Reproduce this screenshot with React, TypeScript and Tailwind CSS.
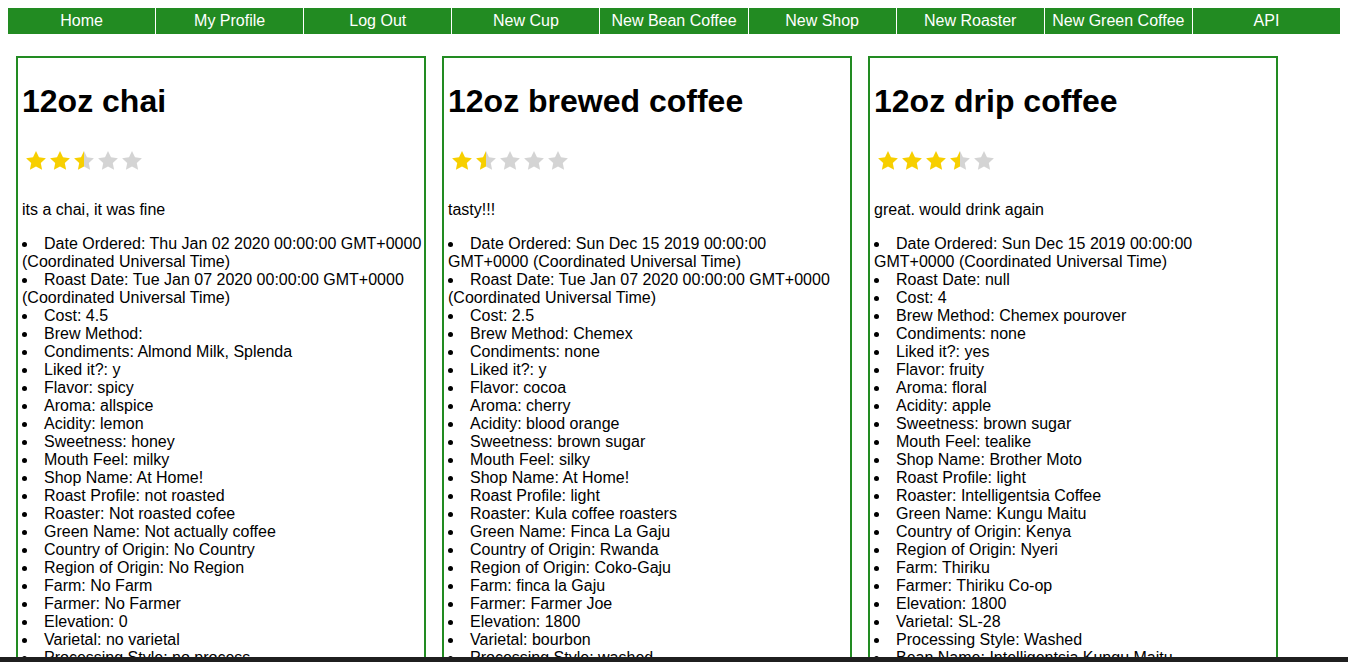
import React from "react";

const links = [
  "Home",
  "My Profile",
  "Log Out",
  "New Cup",
  "New Bean Coffee",
  "New Shop",
  "New Roaster",
  "New Green Coffee",
  "API",
];

type Cup = {
  id: string;
  name: string;
  rating: number;
  notes: string;
  details: string[];
};

const cups: Cup[] = [
  {
    id: "chai",
    name: "12oz chai",
    rating: 2.5,
    notes: "its a chai, it was fine",
    details: [
      "Date Ordered: Thu Jan 02 2020 00:00:00 GMT+0000 (Coordinated Universal Time)",
      "Roast Date: Tue Jan 07 2020 00:00:00 GMT+0000 (Coordinated Universal Time)",
      "Cost: 4.5",
      "Brew Method:",
      "Condiments: Almond Milk, Splenda",
      "Liked it?: y",
      "Flavor: spicy",
      "Aroma: allspice",
      "Acidity: lemon",
      "Sweetness: honey",
      "Mouth Feel: milky",
      "Shop Name: At Home!",
      "Roast Profile: not roasted",
      "Roaster: Not roasted cofee",
      "Green Name: Not actually coffee",
      "Country of Origin: No Country",
      "Region of Origin: No Region",
      "Farm: No Farm",
      "Farmer: No Farmer",
      "Elevation: 0",
      "Varietal: no varietal",
      "Processing Style: no process",
      "Bean Name: no bean",
    ],
  },
  {
    id: "brewed",
    name: "12oz brewed coffee",
    rating: 1.5,
    notes: "tasty!!!",
    details: [
      "Date Ordered: Sun Dec 15 2019 00:00:00 GMT+0000 (Coordinated Universal Time)",
      "Roast Date: Tue Jan 07 2020 00:00:00 GMT+0000 (Coordinated Universal Time)",
      "Cost: 2.5",
      "Brew Method: Chemex",
      "Condiments: none",
      "Liked it?: y",
      "Flavor: cocoa",
      "Aroma: cherry",
      "Acidity: blood orange",
      "Sweetness: brown sugar",
      "Mouth Feel: silky",
      "Shop Name: At Home!",
      "Roast Profile: light",
      "Roaster: Kula coffee roasters",
      "Green Name: Finca La Gaju",
      "Country of Origin: Rwanda",
      "Region of Origin: Coko-Gaju",
      "Farm: finca la Gaju",
      "Farmer: Farmer Joe",
      "Elevation: 1800",
      "Varietal: bourbon",
      "Processing Style: washed",
      "Bean Name: Kula Finca La Gaju",
    ],
  },
  {
    id: "drip",
    name: "12oz drip coffee",
    rating: 3.5,
    notes: "great. would drink again",
    details: [
      "Date Ordered: Sun Dec 15 2019 00:00:00 GMT+0000 (Coordinated Universal Time)",
      "Roast Date: null",
      "Cost: 4",
      "Brew Method: Chemex pourover",
      "Condiments: none",
      "Liked it?: yes",
      "Flavor: fruity",
      "Aroma: floral",
      "Acidity: apple",
      "Sweetness: brown sugar",
      "Mouth Feel: tealike",
      "Shop Name: Brother Moto",
      "Roast Profile: light",
      "Roaster: Intelligentsia Coffee",
      "Green Name: Kungu Maitu",
      "Country of Origin: Kenya",
      "Region of Origin: Nyeri",
      "Farm: Thiriku",
      "Farmer: Thiriku Co-op",
      "Elevation: 1800",
      "Varietal: SL-28",
      "Processing Style: Washed",
      "Bean Name: Intelligentsia Kungu Maitu",
    ],
  },
];

const STAR =
  "M12 2l3 6.3 6.9.9-5.1 4.8 1.3 6.8L12 17.5l-6.1 3.3 1.3-6.8-5.1-4.8 6.9-.9z";

function Star(props: { fill: number; uid: string }) {
  const gid = `star-${props.uid}`;
  const pct = `${props.fill * 100}%`;
  return (
    <svg width="24" height="24" viewBox="0 0 24 24" className="block">
      <defs>
        <linearGradient id={gid} x1="0" x2="1" y1="0" y2="0">
          <stop offset={pct} stopColor="#f7cf00" />
          <stop offset={pct} stopColor="#d4d4d4" />
        </linearGradient>
      </defs>
      <path d={STAR} fill={`url(#${gid})`} />
    </svg>
  );
}

function Rating(props: { value: number; id: string }) {
  return (
    <div className="mt-[28px] ml-[2px] flex h-[26px] items-center">
      {[0, 1, 2, 3, 4].map((i) => (
        <Star
          key={i}
          uid={`${props.id}-${i}`}
          fill={Math.max(0, Math.min(1, props.value - i))}
        />
      ))}
    </div>
  );
}

const CupCard = ({ cup }: { cup: Cup }) => (
  <div className="m-2 w-[410px] shrink-0 self-start border-2 border-[#228b22] pb-4 pl-1">
    <h1 className="mt-[25px] text-[32px] leading-[37px] font-bold">{cup.name}</h1>
    <Rating value={cup.rating} id={cup.id} />
    <p className="mt-[27px] leading-[18px]">{cup.notes}</p>
    <ul className="mt-4 list-inside list-disc leading-[18px]">
      {cup.details.map((d) => (
        <li key={d}>{d}</li>
      ))}
    </ul>
  </div>
);

export default function App() {
  return (
    <div className="m-2 font-['Liberation_Sans',Arial,sans-serif] text-[16px] text-black">
      <nav className="flex h-[26px] bg-[#228b22]">
        {links.map((l, i) => (
          <a
            key={l}
            href="#"
            className={`flex flex-1 items-center justify-center text-white ${
              i < links.length - 1 ? "border-r border-white" : ""
            }`}
          >
            {l}
          </a>
        ))}
      </nav>
      <div className="mt-[14px] flex">
        {cups.map((c) => (
          <CupCard key={c.id} cup={c} />
        ))}
      </div>
      <div className="fixed bottom-0 left-0 h-[5px] w-full bg-[#1f1f1f]" />
    </div>
  );
}
